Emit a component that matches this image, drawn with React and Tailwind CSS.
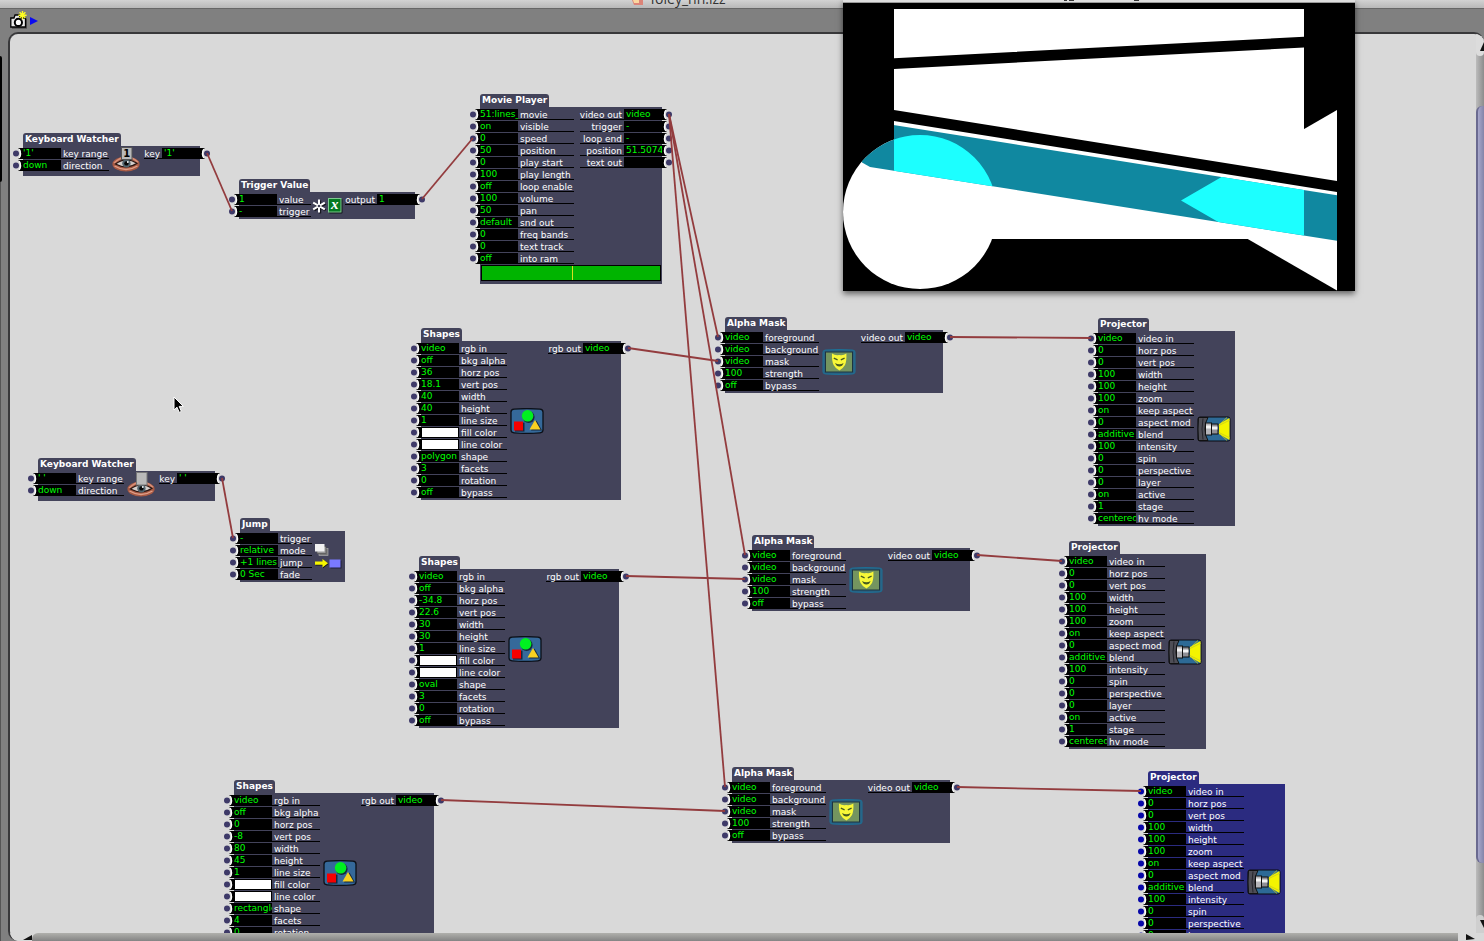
import React from "react";

const V = "video";

const SHAPE_LABELS = ["rgb in", "bkg alpha", "horz pos", "vert pos", "width", "height", "line size", "fill color", "line color", "shape", "facets", "rotation", "bypass"];
const PROJECTOR_LABELS = ["video in", "horz pos", "vert pos", "width", "height", "zoom", "keep aspect", "aspect mod", "blend", "intensity", "spin", "perspective", "layer", "active", "stage", "hv mode"];
const PROJECTOR_VALUES = [V, "0", "0", "100", "100", "100", "on", "0", "additive", "100", "0", "0", "0", "on", "1", "centered"];
const MASK_LABELS = ["foreground", "background", "mask", "strength", "bypass"];
const MASK_VALUES = [V, V, V, "100", "off"];

const pair = (labels, values) => labels.map((label, i) => [label, values[i]]);

const shapes = (id, x, y, values) => ({
  id, x, y, title: "Shapes", width: "w-[200px]", labelWidth: "w-12", icon: ShapesIcon,
  inputs: pair(SHAPE_LABELS, values), outputs: [["rgb out", V]],
});
const mask = (id, x, y) => ({
  id, x, y, title: "Alpha Mask", width: "w-[218px]", labelWidth: "w-14", icon: MaskIcon,
  inputs: pair(MASK_LABELS, MASK_VALUES), outputs: [["video out", V]],
});
const projector = (id, x, y, selected) => ({
  id, x, y, selected, title: "Projector", width: "w-[137px]", labelWidth: "w-[58px]", icon: ProjectorIcon,
  inputs: pair(PROJECTOR_LABELS, PROJECTOR_VALUES), outputs: [],
});
const keyboard = (id, x, y, key, icon) => ({
  id, x, y, title: "Keyboard Watcher", width: "w-[177px]", labelWidth: "w-12", icon,
  inputs: [["key range", key], ["direction", "down"]], outputs: [["key", key]],
});

const NODES = [
  keyboard("kw1", 13, 99, "'1'", KeyOneIcon),
  {
    id: "trig", x: 229, y: 145, title: "Trigger Value", width: "w-[176px]", labelWidth: "w-[34px]", icon: TriggerIcon,
    inputs: [["value", "1"], ["trigger", "-"]], outputs: [["output", "1"]],
  },
  {
    id: "movie", x: 470, y: 60, title: "Movie Player", width: "w-[182px]", labelWidth: "w-14", progress: true,
    inputs: [["movie", "51:lines_"], ["visible", "on"], ["speed", "0"], ["position", "50"], ["play start", "0"], ["play length", "100"], ["loop enable", "off"], ["volume", "100"], ["pan", "50"], ["snd out", "default"], ["freq bands", "0"], ["text track", "0"], ["into ram", "off"]],
    outputs: [["video out", V], ["trigger", "-"], ["loop end", "-"], ["position", "51.5074"], ["text out", ""]],
  },
  shapes("shapes1", 411, 294, [V, "off", "36", "18.1", "40", "40", "1", "#fff", "#fff", "polygon", "3", "0", "off"]),
  shapes("shapes2", 409, 522, [V, "off", "-34.8", "22.6", "30", "30", "1", "#fff", "#fff", "oval", "3", "0", "off"]),
  shapes("shapes3", 224, 746, [V, "off", "0", "-8", "80", "45", "1", "#fff", "#fff", "rectangle", "4", "0", "off"]),
  mask("mask1", 715, 283),
  mask("mask2", 742, 501),
  mask("mask3", 722, 733),
  projector("proj1", 1088, 284),
  projector("proj2", 1059, 507),
  projector("proj3", 1138, 737, true),
  keyboard("kw2", 28, 424, "' '", KeyBlankIcon),
  {
    id: "jump", x: 230, y: 484, title: "Jump", width: "w-[105px]", labelWidth: "w-[34px]", icon: JumpIcon,
    inputs: [["trigger", "-"], ["mode", "relative"], ["jump", "+1 lines"], ["fade", "0 Sec"]], outputs: [],
  },
];

const WIRES = [
  [197, 119, 222, 177], [412, 165, 463, 104],
  [659, 80, 708, 303], [659, 80, 735, 521], [659, 80, 715, 753],
  [618, 314, 708, 327], [616, 542, 735, 545], [431, 766, 715, 777],
  [940, 303, 1081, 304], [967, 521, 1052, 527], [947, 753, 1131, 757],
  [212, 444, 223, 504],
];

function ShapesIcon() {
  return (
    <svg className="h-[26px] w-[34px] shrink-0" viewBox="0 0 34 26">
      <path d="M1 4Q1 1.5 4 1.2Q17 0 30 1.2Q33 1.5 33 4V22Q33 24.5 30 24.8Q17 26 4 24.8Q1 24.5 1 22Z" fill="#35699a" stroke="#0c1018" strokeWidth="1.3" />
      <circle cx="18.6" cy="9" r="6" fill="#16283c" />
      <rect x="5" y="14.6" width="9.5" height="9" fill="#16283c" />
      <path d="M26.5 12.5L32 22.5H21Z" fill="#16283c" />
      <circle cx="17.6" cy="7.8" r="5.8" fill="#00f020" />
      <rect x="4" y="13.5" width="9" height="9" fill="#f60000" />
      <path d="M25 12L30.5 21.4H19.5Z" fill="#f8d020" />
    </svg>
  );
}

function MaskIcon() {
  return (
    <svg className="h-[26px] w-[34px] shrink-0" viewBox="0 0 34 26">
      <path d="M1 3Q1 1 4 1Q17 0 30 1Q33 1 33 3V23Q33 25 30 25Q17 26 4 25Q1 25 1 23Z" fill="#2a6080" stroke="#1d7096" strokeWidth="1" />
      <rect x="3.5" y="3" width="27" height="20" fill="#74955f" stroke="#1c3440" />
      <path d="M10 4.6Q13 6.6 17.2 6Q21.4 6.6 24.4 4.6Q24.8 12 23 16Q20.6 20 17.4 21.4Q13.8 20 11.6 16Q9.6 12 10 4.6Z" fill="#f8f838" />
      <path d="M11.8 9.2L15.6 10.8M18.8 10.8L22.6 9.2" fill="none" stroke="#465a20" strokeWidth="1.3" />
      <path d="M13 14Q17.4 16.4 21.6 14Q20.4 17.6 17.4 17.6Q14.4 17.6 13 14Z" fill="#465a20" />
    </svg>
  );
}

function ProjectorIcon() {
  return (
    <svg className="h-[26px] w-[34px] shrink-0" viewBox="0 0 34 26">
      <rect x="1" y="1" width="32" height="24" rx="2" fill="#2d6a96" stroke="#0a0a10" />
      <path d="M1.5 1.5H11Q8 6 8 13Q8 20 11 24.5H1.5Q0.5 13 1.5 1.5Z" fill="#4e4e56" stroke="#111" />
      <path d="M6 2.5Q4 13 6 23.5" fill="none" stroke="#25252c" />
      <path d="M32.5 2L22 8V18L32.5 24Z" fill="#f4f400" />
      <path d="M33 4L21 10M33 22L21 16M30 1.5L23 8M30 24.5L23 18" stroke="#c8cc20" strokeWidth=".8" />
      <rect x="8.5" y="7" width="6" height="12" fill="#b4b4b8" stroke="#111" />
      <rect x="14.5" y="8" width="6.5" height="10" fill="#909096" stroke="#111" />
      <path d="M9 11H14M15 12H20.5" stroke="#f4f4f4" strokeWidth="3" />
    </svg>
  );
}

function Eye() {
  return (
    <g>
      <ellipse cx="14" cy="17" rx="13.6" ry="7.6" fill="#a85a44" />
      <path d="M2 16Q8 10 14 10.2Q21 10 26 15.4" fill="none" stroke="#d89078" strokeWidth="1.6" />
      <path d="M2.5 19Q14 26 25.5 19" fill="none" stroke="#e0a088" strokeWidth="1.4" />
      <path d="M3.4 17Q14 9 25 16.2Q15 23 3.4 17Z" fill="#d4cecb" stroke="#2a1612" strokeWidth="1.2" />
      <circle cx="14.4" cy="16.4" r="4.2" fill="#51646e" />
      <circle cx="14.4" cy="16.4" r="2.2" fill="#080808" />
      <circle cx="15.8" cy="15" r=".9" fill="#fff" />
    </g>
  );
}

function KeyOneIcon() {
  return (
    <svg className="-my-px h-[26px] w-7 shrink-0" viewBox="0 0 28 26">
      <Eye />
      <rect x="9.5" y="0.5" width="10.5" height="12" fill="#b9b9b9" stroke="#555" />
      <text x="14.8" y="10" textAnchor="middle" fontFamily="DejaVu Sans" fontWeight="bold" fontSize="10" fill="#000">1</text>
    </svg>
  );
}

function KeyBlankIcon() {
  return (
    <svg className="-my-px h-[26px] w-7 shrink-0" viewBox="0 0 28 26">
      <Eye />
      <rect x="9.5" y="0.5" width="10.5" height="12.5" fill="#b9b9b9" stroke="#777" />
    </svg>
  );
}

function TriggerIcon() {
  return (
    <svg className="-ml-[2px] h-[18px] w-8 shrink-0" viewBox="0 0 32 18">
      <path d="M7 2.5V15.5M1.4 5.8L12.6 12.2M1.4 12.2L12.6 5.8" stroke="#16161e" strokeWidth="2.4" transform="translate(1 1)" />
      <path d="M7 2.5V15.5M1.2 5.6L12.8 12.4M1.2 12.4L12.8 5.6" stroke="#fff" strokeWidth="2" />
      <circle cx="7" cy="9" r="1.3" fill="#43435a" />
      <rect x="17" y="2" width="13.5" height="14.5" rx="1" fill="#10151a" />
      <rect x="16.5" y="1.5" width="12.5" height="13.5" fill="#067a22" stroke="#7fc890" />
      <text x="22.8" y="12" textAnchor="middle" fontFamily="Liberation Serif" fontStyle="italic" fontWeight="bold" fontSize="15" fill="#fff">x</text>
    </svg>
  );
}

function JumpIcon() {
  return (
    <svg className="h-7 w-7 shrink-0" viewBox="0 0 28 28">
      <rect x="4" y="5.5" width="9" height="7" fill="#777" stroke="#aaa" strokeWidth=".7" />
      <rect x="2" y="3.5" width="9" height="7" fill="#999" stroke="#555" strokeWidth=".7" />
      <rect x="0" y="1" width="9.5" height="7.5" fill="#f2f2f2" />
      <path d="M.5 19.2H8V16.8L13.5 21L8 25.2V22.4H.5Z" fill="#101018" />
      <path d="M0 18.6H7.5V16L13 20.2L7.5 24.4V21.8H0Z" fill="#f6f600" />
      <rect x="15.5" y="17.5" width="11" height="8" fill="#20203a" />
      <rect x="14.5" y="16.5" width="11" height="8" fill="#7a7aff" />
    </svg>
  );
}

function Pointer() {
  return (
    <svg className="pointer-events-none absolute top-[362px] left-[163px] h-[18px] w-3" viewBox="0 0 12 18">
      <path d="M1 1V14L4 11.2L6.2 16.4L8.4 15.4L6.2 10.4H10.4Z" fill="#000" stroke="#fff" strokeWidth="1" />
    </svg>
  );
}

function Port({ selected, flip }) {
  return (
    <svg className={flip ? "h-3 w-[10px] shrink-0 -scale-x-100" : "h-3 w-[10px] shrink-0"} viewBox="0 0 10 12">
      <rect x="5.5" y="0" width="4.5" height="11" fill="#000" />
      <path d="M5 0.8H6.6Q9.2 5.5 6.6 10.2H5Z" fill="#d9d9d9" />
      <path d="M6.4 1.2Q8.8 5.5 6.4 9.8" fill="none" stroke="#fff" strokeWidth="1.2" />
      <circle cx="3" cy="5.5" r="3" fill={selected ? "#0808a8" : "#3e3a68"} />
    </svg>
  );
}

function InputRow({ id, label, value, labelWidth, selected }) {
  return (
    <div className="flex h-3 items-start">
      <Port selected={selected} />
      {value === "#fff" ? (
        <button id={id} type="button" className="h-[11px] w-[38px] shrink-0 border border-black bg-white" />
      ) : (
        <input id={id} defaultValue={value} className="h-[11px] w-[38px] shrink-0 bg-black p-0 text-[9px] leading-[11px] text-[#00ff00] outline-none" />
      )}
      <label htmlFor={id} className={`${labelWidth} h-[11px] shrink-0 border-b border-black pl-[2px] leading-[13px] whitespace-nowrap text-white`}>
        {label}
      </label>
    </div>
  );
}

function OutputRow({ id, label, value }) {
  return (
    <div className="flex h-3 items-start">
      <label htmlFor={id} className="h-[11px] grow border-b border-black pr-[2px] text-right leading-[13px] whitespace-nowrap text-white">
        {label}
      </label>
      <output id={id} className="h-[11px] w-[38px] shrink-0 overflow-hidden bg-black pl-[2px] leading-[11px] whitespace-nowrap text-[#00ff00]">
        {value}
      </output>
      <Port flip />
    </div>
  );
}

function Node({ node }) {
  const { id, x, y, title, width, labelWidth, inputs, outputs, selected, progress } = node;
  const Icon = node.icon;
  const bg = selected ? "bg-[#2b2b80]" : "bg-[#43435a]";
  return (
    <section className={`absolute ${width} text-[9px]`} style={{ left: x, top: y }}>
      <h2 className={`${bg} h-[13px] w-max rounded-t-[3px] px-[2px] leading-[13px] font-bold text-white`}>{title}</h2>
      <div className={`${bg} min-h-[27px] py-[2px] pb-px`}>
        <div className="-mx-[10px] flex">
          <div>
            {inputs.map(([label, value]) => (
              <InputRow key={label} id={`${id}-in-${label}`} label={label} value={value} labelWidth={labelWidth} selected={selected} />
            ))}
          </div>
          {Icon && <div className="ml-[3px] flex items-center"><Icon /></div>}
          <div className="ml-auto">
            {outputs.map(([label, value]) => (
              <OutputRow key={label} id={`${id}-out-${label}`} label={label} value={value} />
            ))}
          </div>
        </div>
        {progress && (
          <div className="mx-px mb-[2px] flex h-4 border border-black bg-[#00b400]">
            <div className="w-[51%] border-r border-[#d8e020]" />
          </div>
        )}
        {title === "Keyboard Watcher" && <div className="h-[3px]" />}
      </div>
    </section>
  );
}

function Wires() {
  return (
    <svg className="pointer-events-none absolute inset-0 h-full w-full">
      {WIRES.map(([x1, y1, x2, y2]) => (
        <line key={`${x1}-${x2}-${y2}`} x1={x1} y1={y1} x2={x2} y2={y2} stroke="#933c3e" strokeWidth="1.8" />
      ))}
    </svg>
  );
}

function Stage() {
  return (
    <section aria-label="Stage" className="absolute top-0 left-[843px] w-[512px] bg-black shadow-[0_3px_6px_rgba(0,0,0,0.55)]">
      <header className="flex h-[3px] border-b border-[#999] bg-[#dedede]">
        <svg className="h-[2px] w-full" viewBox="0 0 512 2">
          <path d="M221 0h3v1h-3zM226 0h5v1h-5zM291 0h5v1h-5z" fill="#333" />
        </svg>
      </header>
      <svg className="block h-72 w-full" viewBox="843 3 512 288">
        <defs>
          <clipPath id="lit">
            <rect x="894" y="9" width="410" height="230" />
            <ellipse cx="920" cy="212" rx="77" ry="77" />
            <path d="M1181 200.5L1337 110V290.5Z" />
          </clipPath>
          <clipPath id="overlap">
            <ellipse cx="920" cy="212" rx="77" ry="77" />
            <path d="M1181 200.5L1337 110V290.5Z" />
          </clipPath>
          <clipPath id="screen">
            <rect x="894" y="9" width="410" height="230" />
          </clipPath>
        </defs>
        <rect x="843" y="3" width="512" height="288" fill="#000" />
        <rect x="894" y="9" width="410" height="230" fill="#fff" />
        <ellipse cx="920" cy="212" rx="77" ry="77" fill="#fff" />
        <path d="M1181 200.5L1337 110V290.5Z" fill="#fff" />
        <path d="M894 58.3L1304 36.7V47.5L894 69ZM894 110L1337 181V192L894 121Z" fill="#000" />
        <path clipPath="url(#lit)" d="M862 120L1337 195.3V240.7L870 167L862 162.5Z" fill="#1088a0" />
        <g clipPath="url(#screen)">
          <path clipPath="url(#overlap)" d="M862 120L1337 195.3V240.7L870 167L862 162.5Z" fill="#1cffff" />
        </g>
      </svg>
    </section>
  );
}

function Toolbar() {
  return (
    <div className="flex h-[23px] shrink-0 items-start gap-[2px] bg-[#808080] pt-px pl-[10px]">
      <button type="button" aria-label="Snapshot">
        <svg className="h-[19px] w-[18px]" viewBox="0 0 18 19">
          <path d="M1 8H4L5 5H9L10 8H16V18H1Z" fill="#222" transform="translate(1 0.8)" opacity=".5" />
          <path d="M.8 8H4L5 5H9.4L10.4 8H15.5V17H.8Z" fill="#e8e8e8" stroke="#000" strokeWidth="1.3" />
          <circle cx="8.4" cy="12.4" r="3.6" fill="#fff" stroke="#000" strokeWidth="2" />
          <path d="M12.5 1V9.4M8.4 5.2H16.6M9.6 2.3L15.4 8.1M15.4 2.3L9.6 8.1" stroke="#ffff20" strokeWidth="1.4" />
        </svg>
      </button>
      <button type="button" aria-label="Show snapshots" className="pt-[7px]">
        <svg className="h-2 w-2" viewBox="0 0 8 8"><path d="M0 0L8 4L0 8Z" fill="#0a0af0" /></svg>
      </button>
    </div>
  );
}

function VerticalScrollbar() {
  return (
    <div className="flex flex-col bg-gradient-to-r from-[#bcbcbc] to-[#8c8c8c]">
      <div className="h-[22px] rounded-b-md bg-[#dcdcdc] pt-2">
        <svg className="ml-auto h-[9px] w-1" viewBox="0 0 4 9"><path d="M4 0V9H0Z" fill="#111" /></svg>
      </div>
      <div className="mt-[50px] mb-[52px] grow rounded-l-md border-l-2 border-[#6a6a90] bg-gradient-to-r from-[#a8a8cc] to-[#8484a8]" />
      <div className="flex h-[18px] items-center justify-end rounded-t-md bg-[#cfcfcf]">
        <svg className="h-2 w-1" viewBox="0 0 4 8"><path d="M0 0H4V8Z" fill="#111" /></svg>
      </div>
    </div>
  );
}

function HorizontalScrollbar() {
  return (
    <div className="col-span-2 flex bg-[#d9d9d9]">
      <div className="flex w-[22px] items-center justify-end">
        <svg className="h-[5px] w-[9px]" viewBox="0 0 9 5"><path d="M9 0V5H0Z" fill="#111" /></svg>
      </div>
      <div className="grow rounded-tl-md bg-gradient-to-b from-[#b0b0ac] to-[#848484]" />
      <div className="flex w-[26px] items-center pl-2">
        <svg className="h-[6px] w-[9px]" viewBox="0 0 9 6"><path d="M0 0L9 5L0 6Z" fill="#111" /></svg>
      </div>
    </div>
  );
}

export default function App() {
  return (
    <div className="relative flex h-screen flex-col overflow-hidden bg-[#808080] font-['DejaVu_Sans',Verdana,sans-serif] text-[9px]">
      <header className="flex h-[9px] shrink-0 items-end justify-center gap-[7px] overflow-hidden border-b border-[#666] bg-gradient-to-b from-[#d2d2d2] to-[#b8b8b8] pr-[126px] pb-[3px]">
        <svg className="h-[5px] w-[11px]" viewBox="0 0 11 5">
          <path d="M0 0H11V5H2Z" fill="#dc8478" />
          <path d="M1 0H7V3H2Z" fill="#fbd7a0" />
        </svg>
        <h1 className="font-['Open_Sans',sans-serif] text-sm leading-[12px] text-[#333]">foley_nn.izz</h1>
      </header>
      <Toolbar />
      <div className="flex min-h-0 grow">
        <div className="flex w-2 shrink-0 flex-col pt-6">
          <div className="h-[126px] w-[2px] rounded-r bg-black" />
          <div className="w-px grow bg-[#555]" />
        </div>
        <div className="grid min-w-0 grow grid-cols-[1fr_8px] grid-rows-[1fr_8px] overflow-hidden rounded-t-[10px] rounded-bl-[10px] border-t-2 border-l-2 border-[#38383a] bg-[#d9d9d9]">
          <main className="relative overflow-hidden">
            {NODES.map((node) => <Node key={node.id} node={node} />)}
            <Wires />
            <Pointer />
          </main>
          <VerticalScrollbar />
          <HorizontalScrollbar />
        </div>
      </div>
      <Stage />
    </div>
  );
}
